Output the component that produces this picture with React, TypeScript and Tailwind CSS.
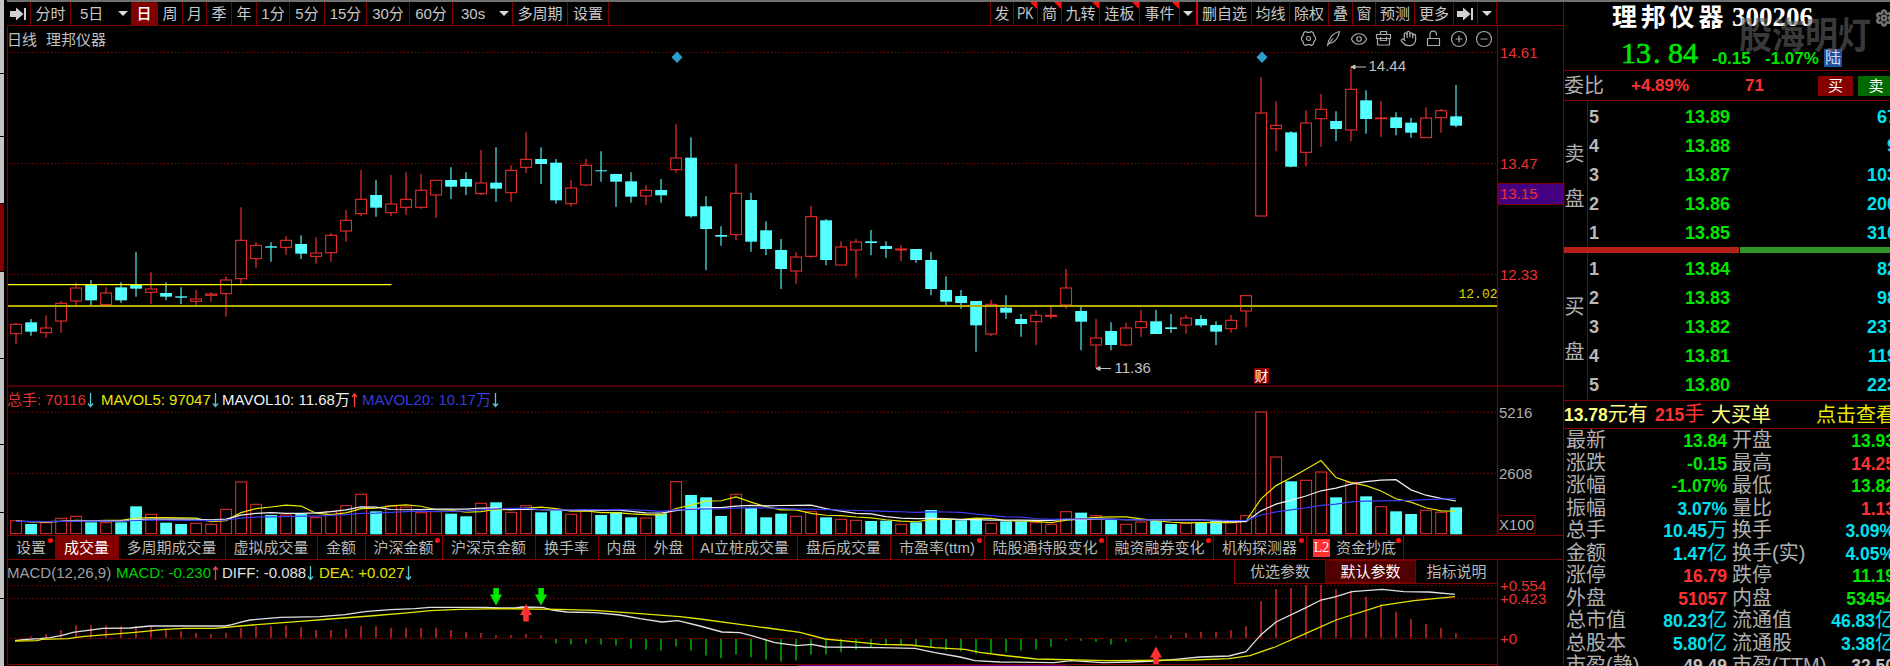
import type { ReactNode } from 'react';
import { CircleMinus, CirclePlus, Eye, Hand, Settings } from 'lucide-react';
import { clsx } from 'clsx';

// ---------------------------------------------------------------------------
// Data
// Bar: [up, high, bodyTop, bodyBottom, low, volume, macd], thirds of a pixel
// ---------------------------------------------------------------------------

type Bar = [number, number, number, number, number, number, number];

const BARS: Bar[] = [
  [1, 818, 823, 851, 882, 422, 776], [0, 807, 817, 845, 857, 432, 769], [1, 796, 834, 848, 863, 428, 762],
  [1, 754, 760, 813, 848, 415, 750], [1, 698, 714, 753, 768, 409, 736], [0, 690, 704, 751, 767, 427, 736],
  [1, 712, 729, 764, 768, 428, 736], [0, 697, 712, 751, 758, 427, 739], [0, 606, 703, 716, 740, 379, 738],
  [1, 667, 717, 727, 762, 403, 738], [0, 697, 729, 740, 751, 428, 748], [0, 712, 739, 743, 762, 432, 754],
  [1, 720, 747, 754, 767, 430, 759], [1, 727, 732, 736, 755, 433, 763], [1, 679, 690, 731, 800, 388, 758],
  [1, 472, 571, 686, 702, 306, 743], [1, 577, 586, 626, 653, 373, 739], [0, 577, 589, 593, 635, 405, 739],
  [1, 559, 571, 592, 615, 405, 736], [0, 556, 582, 611, 627, 402, 742], [1, 562, 609, 619, 641, 413, 750],
  [1, 548, 556, 608, 635, 395, 750], [1, 480, 511, 543, 575, 377, 747], [1, 360, 448, 491, 499, 343, 739],
  [0, 390, 435, 473, 500, 394, 739], [1, 375, 462, 488, 499, 378, 743], [1, 367, 448, 472, 495, 381, 743],
  [1, 372, 421, 472, 476, 398, 743], [1, 391, 391, 435, 503, 395, 743], [0, 352, 390, 410, 447, 401, 750],
  [0, 367, 387, 410, 435, 409, 755], [1, 300, 399, 431, 435, 370, 759], [0, 292, 398, 416, 455, 367, 766],
  [1, 346, 361, 428, 455, 397, 766], [1, 247, 328, 352, 369, 377, 762], [0, 292, 327, 342, 402, 397, 766],
  [0, 327, 338, 451, 461, 392, 788], [1, 390, 414, 461, 470, 403, 792], [1, 327, 346, 405, 409, 393, 789],
  [0, 304, 361, 364, 395, 405, 792], [0, 372, 372, 395, 470, 396, 795], [0, 367, 394, 440, 458, 412, 804],
  [1, 405, 421, 438, 465, 414, 807], [0, 387, 420, 436, 458, 401, 810], [1, 222, 324, 359, 368, 305, 798],
  [0, 262, 323, 499, 503, 345, 810], [0, 439, 469, 537, 661, 352, 825], [0, 529, 555, 560, 587, 408, 833],
  [1, 342, 430, 554, 570, 343, 822], [0, 428, 450, 575, 605, 384, 830], [0, 514, 541, 597, 616, 412, 837],
  [0, 567, 600, 657, 717, 401, 843], [1, 607, 621, 663, 701, 409, 840], [1, 468, 500, 619, 623, 395, 822],
  [0, 507, 511, 630, 646, 412, 822], [1, 574, 591, 645, 645, 418, 815], [1, 567, 576, 600, 683, 421, 807],
  [0, 540, 574, 579, 616, 423, 800], [0, 574, 588, 597, 623, 422, 795], [1, 586, 597, 600, 634, 433, 795],
  [0, 597, 597, 630, 638, 427, 797], [0, 606, 630, 717, 736, 390, 801], [0, 679, 720, 755, 768, 419, 810],
  [0, 720, 738, 759, 776, 421, 812], [0, 753, 753, 826, 905, 416, 820], [1, 750, 763, 852, 858, 430, 820],
  [0, 736, 773, 788, 807, 424, 815], [0, 792, 807, 822, 860, 424, 810], [1, 780, 796, 815, 885, 428, 807],
  [1, 768, 796, 799, 807, 433, 799], [1, 657, 714, 765, 776, 395, 780], [0, 768, 783, 815, 901, 398, 781],
  [1, 807, 864, 885, 955, 407, 784], [0, 817, 843, 885, 901, 420, 792], [1, 818, 834, 885, 889, 433, 784],
  [1, 780, 815, 833, 860, 426, 778], [0, 780, 814, 852, 852, 423, 769], [0, 792, 832, 837, 849, 432, 766],
  [1, 795, 804, 825, 851, 430, 759], [0, 795, 807, 826, 832, 429, 755], [0, 814, 825, 845, 885, 422, 755],
  [1, 795, 811, 836, 848, 428, 751], [1, 736, 737, 783, 832, 407, 739], [1, 82, 189, 498, 498, 96, 664],
  [1, 154, 226, 236, 304, 231, 627], [0, 244, 247, 350, 352, 304, 624], [1, 181, 219, 307, 349, 301, 615],
  [1, 132, 178, 206, 290, 276, 615], [0, 184, 213, 237, 274, 352, 627], [1, 52, 118, 240, 274, 307, 632],
  [0, 121, 151, 207, 251, 349, 650], [1, 154, 204, 206, 260, 380, 673], [0, 187, 202, 234, 256, 394, 695],
  [0, 203, 218, 248, 263, 402, 717], [1, 172, 204, 263, 263, 391, 732], [1, 177, 182, 203, 248, 397, 743],
  [0, 105, 199, 227, 232, 382, 759],
];

const DIFF: [number, number][] = [
  [15, 782], [23, 779], [40, 776], [50, 773], [62, 766], [73, 757], [86, 752], [103, 745], [130, 744], [150, 738],
  [225, 738], [232, 734], [240, 727], [250, 720], [280, 712], [320, 710], [345, 704], [365, 695], [390, 689], [415, 686],
  [430, 682], [485, 682], [500, 684], [515, 684], [522, 681], [543, 682], [552, 690], [567, 696], [595, 698],
  [620, 705], [640, 716], [662, 726], [678, 722], [700, 738], [722, 756], [740, 758], [755, 770], [775, 788],
  [797, 797], [812, 793], [825, 801], [880, 803], [915, 805], [935, 818], [960, 831], [975, 842], [1000, 846],
  [1054, 848], [1071, 842], [1103, 848], [1132, 846], [1155, 843], [1175, 838], [1200, 831], [1229, 828],
  [1246, 815], [1261, 764], [1276, 726], [1306, 683], [1321, 660], [1336, 650], [1352, 635], [1382, 628],
  [1404, 635], [1429, 636], [1455, 643],
];

const DEA: [number, number][] = [
  [15, 783], [37, 782], [42, 778], [68, 776], [82, 770], [110, 763], [135, 757], [165, 748], [185, 745], [215, 745],
  [240, 738], [270, 731], [300, 724], [330, 717], [370, 708], [410, 698], [430, 692], [460, 688], [500, 686],
  [560, 688], [595, 691], [640, 701], [680, 710], [700, 717], [740, 733], [775, 747], [800, 757], [825, 777],
  [860, 787], [880, 793], [910, 795], [935, 803], [965, 808], [980, 817], [1000, 825], [1036, 837], [1107, 842],
  [1193, 840], [1229, 836], [1250, 827], [1275, 801], [1306, 760], [1336, 720], [1382, 676], [1414, 662], [1455, 650],
];

const RED = '#ff3232';
const CYAN = '#54ffff';
const LINE = '#800000';

const barX = (i: number) => 16 + i * 15;
const priceY = (v: number) => 50 + v / 3;
const paneY = (v: number) => 380 + v / 3;

// Moving average of the volume; bars before the first one count as flat
function movingAverage(days: number) {
  return BARS.map((_, i) => {
    let sum = 0;
    for (let k = 0; k < days; k++) sum += i - k >= 0 ? BARS[i - k][5] : 424;
    return `${barX(i)},${paneY(sum / days)}`;
  }).join(' ');
}

const toPoints = (pts: [number, number][]) => pts.map(([x, v]) => `${x},${paneY(v)}`).join(' ');

// ---------------------------------------------------------------------------
// Charts (all share the page's coordinates through their viewBox)
// ---------------------------------------------------------------------------

function Dotted({ y }: { y: number }) {
  return <line x1="10" x2="1496" y1={y} y2={y} stroke="#a00000" strokeDasharray="1.3 2.45" />;
}

function PriceChart() {
  return (
    <svg className="block shrink-0 overflow-visible text-[15px]" width="1557" height="337" viewBox="7 50 1557 337">
      {[52.5, 163.5, 274.5].map((y) => <Dotted key={y} y={y} />)}
      <path d="M7 386.2H1564M1497.5 26V387M7.5 26V387" stroke={LINE} strokeWidth="1.2" />
      {BARS.map(([up, high, top, bottom, low], i) => {
        const x = barX(i);
        const height = (bottom - top) / 3;
        return up ? (
          <g key={i} stroke={RED} fill="none">
            <path d={`M${x} ${priceY(high)}V${priceY(top)}M${x} ${priceY(bottom)}V${priceY(low)}`} strokeOpacity="0.75" strokeWidth="1.5" />
            <rect x={x - 5.3} y={priceY(top)} width="10.8" height={Math.max(height, 0.3)} strokeOpacity="0.9" strokeWidth="1.1" />
          </g>
        ) : (
          <g key={i}>
            <path d={`M${x} ${priceY(high)}V${priceY(low)}`} stroke={CYAN} strokeOpacity="0.75" strokeWidth="1.5" />
            <rect x={x - 5.8} y={priceY(top)} width="11.8" height={height} fill={CYAN} />
          </g>
        );
      })}
      <path d="M8 284.7H391.5" stroke="#ffff00" strokeWidth="1.3" />
      <path d="M8 306H1497" stroke="#b4ac00" strokeWidth="1.8" />
      <path d="M677 51.5l5.5 5.7-5.5 5.7-5.5-5.7zM1262 51.5l5.5 5.7-5.5 5.7-5.5-5.7z" fill="#2c9fd0" />
      <g fill="#c0c0c0" stroke="#c0c0c0">
        <path d="M1351 67H1366M1096 368.5H1111" />
        <path d="M1351 67l4-2v4zM1096 368.5l4-2v4z" />
      </g>
      <text x="1368.5" y="71.3" fill="#c0c0c0">14.44</text>
      <text x="1114.5" y="372.5" fill="#c0c0c0">11.36</text>
      <text x="1458.5" y="297.5" fill="#d8d800" className="font-['Liberation_Mono'] text-[13px]">12.02</text>
      <rect x="1254" y="368" width="15" height="15.5" fill="#900000" />
      <text x="1254.5" y="381" fill="#ffffff" className="text-[14px]">财</text>
      <rect x="1498" y="183.5" width="66" height="21" fill="#440080" stroke={LINE} />
      <g fill="#ee3030">
        <text x="1500" y="57.5">14.61</text>
        <text x="1500" y="169">13.47</text>
        <text x="1500" y="199">13.15</text>
        <text x="1500" y="280">12.33</text>
      </g>
    </svg>
  );
}

function VolumeChart() {
  return (
    <svg className="block shrink-0 overflow-visible text-[15px]" width="1557" height="124" viewBox="7 411 1557 124">
      <Dotted y={412.3} />
      <Dotted y={473.5} />
      <path d="M1497.5 387V535M7.5 387V535" stroke={LINE} strokeWidth="1.2" />
      {BARS.map((bar, i) => {
        const y = paneY(bar[5]);
        return bar[0] ? (
          <rect key={i} x={barX(i) - 5.3} y={y} width="10.8" height={533.6 - y} fill="none" stroke={RED} strokeOpacity="0.85" strokeWidth="1.1" />
        ) : (
          <rect key={i} x={barX(i) - 5.8} y={y} width="11.8" height={534.3 - y} fill={CYAN} />
        );
      })}
      <g fill="none" strokeWidth="1.2">
        <polyline points={movingAverage(5)} stroke="#e8e800" />
        <polyline points={movingAverage(10)} stroke="#f0f0f0" />
        <polyline points={movingAverage(20)} stroke="#3c3cf0" />
      </g>
      <g fill="#b0b0b0">
        <text x="1499" y="418">5216</text>
        <text x="1499" y="479">2608</text>
        <rect x="1498" y="515.5" width="37" height="18" fill="none" stroke={LINE} />
        <text x="1499" y="530">X100</text>
      </g>
    </svg>
  );
}

function MacdChart() {
  return (
    <svg className="block shrink-0 overflow-visible text-[15px]" width="1557" height="82" viewBox="7 584 1557 82">
      <Dotted y={585.7} />
      <Dotted y={598.5} />
      <line x1="10" x2="1497" y1="638.4" y2="638.4" stroke="#b00000" strokeDasharray="1.2 1.3" />
      <path d="M1497.5 560V666M7.5 560V666M7 664.5H1498" stroke={LINE} strokeWidth="1.2" />
      <path d="M797 665.5H1066" stroke="#50007a" />
      {BARS.map((bar, i) => {
        const up = bar[6] < 774;
        return (
          <path key={i} d={`M${barX(i)} ${up ? 637.8 : 639}V${paneY(bar[6]) + (up ? 0 : 0.5)}`} stroke={up ? '#c42626' : '#00a800'} strokeWidth="1.6" />
        );
      })}
      <polyline points={toPoints(DIFF)} fill="none" stroke="#e0e0e0" strokeWidth="1.3" />
      <polyline points={toPoints(DEA)} fill="none" stroke="#e4e400" strokeWidth="1.3" />
      <g fill="#00e600">
        <path d="M493.3 588h5.6v6.5h3.2L496 605.5l-6.1-11h3.4z" />
        <path d="M538.3 588h5.6v6.5h3.2L541 605.5l-6.1-11h3.4z" />
      </g>
      <g fill="#ff3030">
        <path d="M526 604l6 11h-3.2v6.5h-5.6V615H520z" />
        <path d="M1156 646.5l6 11h-3.2v6.5h-5.6v-6.5H1150z" />
      </g>
      <g fill="#ee3030">
        <text x="1500" y="591">+0.554</text>
        <text x="1500" y="604">+0.423</text>
        <text x="1500" y="643.5">+0</text>
      </g>
    </svg>
  );
}

// ---------------------------------------------------------------------------
// Toolbars
// ---------------------------------------------------------------------------

function JumpIcon() {
  return (
    <svg width="17" height="14" viewBox="0 0 17 14" fill="#d0d0d0">
      <path d="M0 4h6V.5l7.500 6.500L6 13.500V10H0zM14 1h2v12h-2z" />
    </svg>
  );
}

function Caret() {
  return <span className="size-0 border-x-[5px] border-t-[5px] border-x-transparent border-t-[#d8d8d8]" />;
}

interface CellProps {
  width: string;
  children: ReactNode;
  active?: boolean;
  corner?: boolean;
}

function Cell({ width, children, active, corner }: CellProps) {
  return (
    <div className={clsx('relative flex shrink-0 items-center justify-center border-r border-[#800000]', width, active && 'bg-[#800000] text-white font-medium')}>
      {children}
      {corner && <span className="absolute top-0 right-0 size-0 border-t-[7px] border-l-[7px] border-t-[#ff1010] border-l-transparent" />}
    </div>
  );
}

function Toolbar() {
  return (
    <div className="flex h-[24px] shrink-0 border-b border-[#800000] text-[15px] text-[#c8c8c8]">
      <Cell width="w-[24px]"><JumpIcon /></Cell>
      <Cell width="w-[40px]">分时</Cell>
      <div className="flex w-[60px] shrink-0 items-center justify-between pr-[3px] pl-[9px]">5日<Caret /></div>
      <Cell width="w-[27px]" active>日</Cell>
      <Cell width="w-[25px]">周</Cell>
      <Cell width="w-[24px]">月</Cell>
      <Cell width="w-[25px]">季</Cell>
      <Cell width="w-[25px]">年</Cell>
      <Cell width="w-[33px]">1分</Cell>
      <Cell width="w-[35px]">5分</Cell>
      <Cell width="w-[42px]">15分</Cell>
      <Cell width="w-[43px]">30分</Cell>
      <Cell width="w-[43px]">60分</Cell>
      <div className="flex w-[60px] shrink-0 items-center justify-between border-r border-[#800000] pr-[3px] pl-[8px]">30s<Caret /></div>
      <Cell width="w-[55px]">多周期</Cell>
      <Cell width="w-[41px]">设置</Cell>
      <div className="flex-1 border-r border-[#800000]" />
      <Cell width="w-[23px]">发</Cell>
      <Cell width="w-[24px]" corner><span className="inline-block origin-center scale-x-[0.72] text-[17px]">PK</span></Cell>
      <Cell width="w-[24px]" corner>简</Cell>
      <Cell width="w-[38px]" corner>九转</Cell>
      <Cell width="w-[40px]" corner>连板</Cell>
      <Cell width="w-[40px]" corner>事件</Cell>
      <div className="flex w-[18px] shrink-0 items-center justify-center border-r-2 border-[#e00000]"><Caret /></div>
      <Cell width="w-[54px]">删自选</Cell>
      <Cell width="w-[38px]">均线</Cell>
      <Cell width="w-[39px]">除权</Cell>
      <Cell width="w-[24px]">叠</Cell>
      <Cell width="w-[23px]">窗</Cell>
      <Cell width="w-[39px]">预测</Cell>
      <Cell width="w-[39px]">更多</Cell>
      <Cell width="w-[24px]"><JumpIcon /></Cell>
      <div className="mr-[66px] flex w-[19px] shrink-0 items-center justify-center border-r border-[#800000]"><Caret /></div>
    </div>
  );
}

function ToolIcon({ children }: { children: ReactNode }) {
  return (
    <svg width="17" height="17" viewBox="0 0 17 17" fill="none" stroke="currentColor" strokeWidth="1.2">
      {children}
    </svg>
  );
}

function ChartHeader() {
  return (
    <div className="flex h-[24px] shrink-0 items-center justify-between pt-[2px] pr-[71px] text-[15px] text-[#c0c0c0]">
      <div className="flex gap-[9px]">
        <span>日线</span>
        <span>理邦仪器</span>
      </div>
      <div className="flex gap-[8px] text-[#a8a8a8]">
        <ToolIcon>
          <path d="M5.500 1.500l1.500.8h3l1.500-.8 2 1.500.3 2.200 1.700 2.300v2l-1.700 2.300-.3 2.200-2 1.500-1.500-.8H7l-1.500.8-2-1.500-.3-2.200L1.500 9.500v-2l1.700-2.300.3-2.200z" />
          <circle cx="8.5" cy="8.500" r="2" />
        </ToolIcon>
        <ToolIcon>
          <path d="M2 16L8 8.500M2.500 15.500C3 11 6 3.500 14.500 1.500 13.500 8 9.500 12.500 4 13.500" />
        </ToolIcon>
        <Eye size={18} strokeWidth={1.6} className="-mr-px" />
        <ToolIcon>
          <path d="M1.500 4.500h14v4h-14zM2.500 8.500v6.500h12V8.500M5.500 4.500v-3h6v3M5.500 7v4M11.500 7v4M5.500 10.500h6" />
        </ToolIcon>
        <Hand size={17} strokeWidth={1.8} />
        <ToolIcon>
          <path d="M2.500 8.500h12v7h-12zM5 8.500V4.500a3.200 3.200 0 0 1 6.400-.5v1.500" />
        </ToolIcon>
        <CirclePlus size={18} strokeWidth={1.6} className="-mr-px" />
        <CircleMinus size={18} strokeWidth={1.6} className="-mr-px" />
      </div>
    </div>
  );
}

function Trend({ up }: { up?: boolean }) {
  return (
    <svg className="mt-[3px] ml-px" width="7" height="15" viewBox="0 0 7 15" fill="none" stroke={up ? '#ff4040' : '#58c8d8'} strokeWidth="1.3">
      <path d={up ? 'M3.5 14V1M1 4l2.5-3L6 4' : 'M3.5 0v13M1 10.500l2.500 3L6 10.500'} />
    </svg>
  );
}

function VolumeInfo() {
  return (
    <div className="flex h-[24px] shrink-0 items-center text-[15px]">
      <span className="flex w-[94px] items-center text-[#e03030]">总手: 70116<Trend /></span>
      <span className="flex w-[121px] items-center text-[#e8e800]">MAVOL5: 97047<Trend /></span>
      <span className="flex w-[140px] items-center text-[#f0f0f0]">MAVOL10: 11.68万<Trend up /></span>
      <span className="flex items-center text-[#3a3ad8]">MAVOL20: 10.17万<Trend /></span>
    </div>
  );
}

const TABS: { label: string; width: string; dot?: boolean; active?: boolean; level2?: boolean }[] = [
  { label: '设置', width: 'w-[48px]', dot: true },
  { label: '成交量', width: 'w-[63px]', active: true },
  { label: '多周期成交量', width: 'w-[107px]' },
  { label: '虚拟成交量', width: 'w-[92px]' },
  { label: '金额', width: 'w-[48px]' },
  { label: '沪深金额', width: 'w-[77px]', dot: true },
  { label: '沪深京金额', width: 'w-[93px]' },
  { label: '换手率', width: 'w-[63px]' },
  { label: '内盘', width: 'w-[47px]' },
  { label: '外盘', width: 'w-[47px]' },
  { label: 'AI立桩成交量', width: 'w-[105px]' },
  { label: '盘后成交量', width: 'w-[93px]' },
  { label: '市盈率(ttm)', width: 'w-[94px]', dot: true },
  { label: '陆股通持股变化', width: 'w-[122px]', dot: true },
  { label: '融资融券变化', width: 'w-[107px]', dot: true },
  { label: '机构探测器', width: 'w-[93px]', dot: true },
  { label: '资金抄底', width: 'w-[97px]', dot: true, level2: true },
];

function IndicatorTabs() {
  return (
    <div className="flex h-[25px] shrink-0 border-y border-l border-[#800000] text-[15px] text-[#b8b8b8]">
      {TABS.map((tab) => (
        <div key={tab.label} className={clsx('relative flex shrink-0 items-center justify-center border-r border-[#800000] pr-px', tab.width, tab.active && 'bg-[#800000] text-white')}>
          {tab.level2 && <span className="mr-[6px] flex h-[18px] w-[17px] items-center justify-center bg-[#ff3030] font-['Liberation_Serif'] text-[14px] text-white">L2</span>}
          {tab.label}
          {tab.dot && <span className="absolute top-[2px] right-[2px] size-[5px] rounded-full bg-[#ff1010]" />}
        </div>
      ))}
    </div>
  );
}

function MacdInfo() {
  return (
    <div className="flex h-[24px] shrink-0 items-center text-[15px]">
      <span className="w-[109px] text-[#a0a0a0]">MACD(12,26,9)</span>
      <span className="flex w-[106px] items-center text-[#00d000]">MACD: -0.230<Trend up /></span>
      <span className="flex w-[97px] items-center text-[#e0e0e0]">DIFF: -0.088<Trend /></span>
      <span className="flex items-center text-[#e0e000]">DEA: +0.027<Trend /></span>
      <div className="mr-[66px] ml-auto flex h-full border-b border-l border-[#800000] text-[#b8b8b8]">
        <span className="flex w-[90px] items-center justify-center">优选参数</span>
        <span className="flex w-[91px] items-center justify-center border border-[#800000] bg-[#500000] text-white">默认参数</span>
        <span className="flex w-[81px] items-center justify-center">指标说明</span>
      </div>
    </div>
  );
}

// ---------------------------------------------------------------------------
// Quote panel
// ---------------------------------------------------------------------------

const GREEN = 'text-[#00e600]';
const SOFT_RED = 'text-[#ff3232]';
const AQUA = 'text-[#00e0f0]';
const GREY = 'text-[#c0c0c0]';

const ASKS = [['5', '13.89', '67'], ['4', '13.88', '9'], ['3', '13.87', '103'], ['2', '13.86', '200'], ['1', '13.85', '310']];
const BIDS = [['1', '13.84', '82'], ['2', '13.83', '98'], ['3', '13.82', '237'], ['4', '13.81', '119'], ['5', '13.80', '223']];

const STATS = [
  ['最新', '13.84', GREEN, '开盘', '13.93', GREEN],
  ['涨跌', '-0.15', GREEN, '最高', '14.25', SOFT_RED],
  ['涨幅', '-1.07%', GREEN, '最低', '13.82', GREEN],
  ['振幅', '3.07%', AQUA, '量比', '1.13', SOFT_RED],
  ['总手', '10.45万', AQUA, '换手', '3.09%', AQUA],
  ['金额', '1.47亿', AQUA, '换手(实)', '4.05%', AQUA],
  ['涨停', '16.79', SOFT_RED, '跌停', '11.19', GREEN],
  ['外盘', '51057', SOFT_RED, '内盘', '53454', GREEN],
  ['总市值', '80.23亿', AQUA, '流通值', '46.83亿', AQUA],
  ['总股本', '5.80亿', AQUA, '流通股', '3.38亿', AQUA],
  ['市盈(静)', '49.49', GREY, '市盈(TTM)', '32.50', GREY],
];

// Digits are bold, a trailing 万 / 亿 keeps the regular weight
function Value({ text, color, width }: { text: string; color: string; width: string }) {
  const unit = /[万亿]$/.test(text) ? text.slice(-1) : '';
  return (
    <span className={clsx('shrink-0 text-right whitespace-nowrap', color, width)}>
      <b className="text-[17.5px]">{unit ? text.slice(0, -1) : text}</b>
      {unit}
    </span>
  );
}

function Ladder({ title, rows, height }: { title: string; rows: string[][]; height: string }) {
  return (
    <div className={clsx('flex shrink-0', height)}>
      <div className="flex w-[24px] shrink-0 flex-col items-center justify-center gap-[15px] border-r border-[#800000] pt-[5px] pr-[2px] text-[20px] leading-[30px] text-[#b0b0b0]">
        {title.split('').map((c) => <span key={c}>{c}</span>)}
      </div>
      <div className="flex flex-col pt-[1px] text-[18px] font-bold">
        {rows.map(([level, price, volume]) => (
          <div key={level} className="flex h-[29px] shrink-0 items-center">
            <span className="w-[40px] pl-px text-[#b8b8b8]">{level}</span>
            <span className="w-[102px] text-right text-[#00e600]">{price}</span>
            <span className="w-[167px] text-right text-[#00e0f0]">{volume}</span>
          </div>
        ))}
      </div>
    </div>
  );
}

function QuotePanel() {
  return (
    <div className="flex w-[327px] shrink-0 flex-col overflow-hidden border-l border-[#800000]">
      <div className="relative flex h-[69px] shrink-0 flex-col border-b border-[#800000]">
        <div className="flex h-[32px] items-center pl-[48px] leading-none font-bold whitespace-nowrap text-white">
          <span className="w-[120px] text-[25px] tracking-[3.8px]">理邦仪器</span>
          <span className="font-['Liberation_Serif'] text-[27px]">300206</span>
        </div>
        <div className="flex h-[37px] items-end text-[17px] leading-none font-bold whitespace-nowrap text-[#00e600]">
          <span className="ml-[57px] w-[91px] shrink-0 pb-[2px] font-['Liberation_Serif'] text-[30px] font-normal [-webkit-text-stroke:0.6px]">
            13<span className="inline-block w-[17px] pl-[2px]">.</span>84
          </span>
          <span className="w-[53px] shrink-0 pb-[3px]">-0.15</span>
          <span className="w-[59px] shrink-0 pb-[3px]">-1.07%</span>
          <span className="mb-[3px] flex size-[18px] shrink-0 items-center justify-center bg-[#2450a0] text-[16px] font-normal text-[#d0d8f0]">陆</span>
        </div>
        <span className="absolute top-[15px] left-[175px] origin-top-left scale-y-[1.12] text-[33px] leading-[36px] font-bold whitespace-nowrap text-[#606060]/60">股海明灯</span>
        <Settings className="absolute top-[7px] left-[311px] text-[#707070]" size={18} strokeWidth={3.5} />
      </div>

      <div className="flex h-[30px] shrink-0 items-center border-b border-[#800000] text-[17px]">
        <span className="w-[67px] shrink-0 text-[20px] text-[#b0b0b0]">委比</span>
        <b className="w-[114px] shrink-0 text-[#ff3232]">+4.89%</b>
        <b className="w-[73px] shrink-0 text-[#ff3232]">71</b>
        <span className="mr-[5px] flex h-[20px] w-[35px] shrink-0 items-center justify-center bg-[#860000] text-[15px] text-white">买</span>
        <span className="flex h-[20px] w-[36px] shrink-0 items-center justify-center bg-[#006a00] text-[15px] text-white">卖</span>
      </div>

      <Ladder title="卖盘" rows={ASKS} height="h-[146px]" />
      <div className="flex h-[6px] shrink-0 gap-px">
        <div className="w-[175px] bg-[#b52018]" />
        <div className="flex-1 bg-[#309428]" />
      </div>
      <Ladder title="买盘" rows={BIDS} height="h-[147px]" />

      <div className="flex h-[29px] shrink-0 items-center border-y border-[#800000] text-[20px] whitespace-nowrap text-[#ffff80]">
        <span className="w-[91px] shrink-0"><b className="text-[17.5px]">13.78</b>元有</span>
        <span className="w-[56px] shrink-0 text-[#ff3232]"><b className="text-[17.5px]">215</b>手</span>
        <span className="w-[105px] shrink-0">大买单</span>
        <span className="shrink-0 text-[#e8e800]">点击查看</span>
      </div>

      <div className="flex flex-col text-[20px] text-[#b0b0b0]">
        {STATS.map(([label, value, color, label2, value2, color2]) => (
          <div key={label} className="flex h-[22.5px] items-center leading-none whitespace-nowrap">
            <span className="w-[80px] shrink-0 pl-[2px]">{label}</span>
            <Value text={value} color={color} width="w-[83px]" />
            <span className="w-[90px] shrink-0 pl-[5px]">{label2}</span>
            <Value text={value2} color={color2} width="w-[78px]" />
          </div>
        ))}
      </div>
    </div>
  );
}

// Side rail left of the chart; the fourth section is the selected one
function SideRail() {
  return (
    <div className="mr-[3px] flex w-[4px] shrink-0 flex-col gap-px bg-black">
      {['h-[73px]', 'h-[62px]', 'h-[66px]', 'h-[67px]', 'h-[86px]', 'h-[85px]', 'h-[67px]', 'h-[85px]', 'h-[68px]'].map((h, i) => (
        <div key={i} className={clsx('shrink-0', h, i === 3 ? 'bg-[#860000]' : 'bg-[#c4c4c4]')} />
      ))}
    </div>
  );
}

export default function App() {
  return (
    <div className="flex h-[666px] w-[1890px] overflow-hidden bg-black font-['Liberation_Sans','Noto_Sans_CJK_SC',sans-serif] leading-none">
      <SideRail />
      <div className="flex w-[1883px] shrink-0 flex-col">
        <div className="h-[2px] shrink-0 bg-[#707070]" />
        <div className="flex min-h-0 flex-1">
          <div className="flex w-[1556px] shrink-0 flex-col">
            <Toolbar />
            <ChartHeader />
            <PriceChart />
            <VolumeInfo />
            <VolumeChart />
            <IndicatorTabs />
            <MacdInfo />
            <MacdChart />
          </div>
          <QuotePanel />
        </div>
      </div>
    </div>
  );
}
